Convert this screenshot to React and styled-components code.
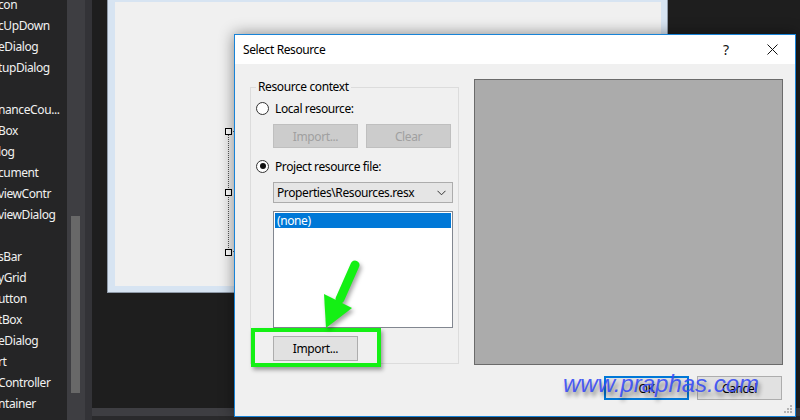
import React from "react";
import styled, { createGlobalStyle } from "styled-components";

const UI_FONT = `"Segoe UI", "Noto Sans", "Liberation Sans", sans-serif`;

const toolItems = [
	"con",
	"cUpDown",
	"eDialog",
	"tupDialog",
	"",
	"nanceCou...",
	"Box",
	"log",
	"cument",
	"viewContr",
	"viewDialog",
	"",
	"sBar",
	"yGrid",
	"utton",
	"tBox",
	"eDialog",
	"rt",
	"Controller",
	"ntainer"
];

const App = () => {
	return (
		<>
			<GlobalStyle />
			<Screen>
				<Toolbox>
					{toolItems.map((name, i) => (
						<ToolItem key={i}>{name}</ToolItem>
					))}
				</Toolbox>
				<ScrollTrack>
					<Thumb />
				</ScrollTrack>
				<Strip />
				<Designer>
					<Canvas>
						<FormFrame>
							<FormBody>
								<Selection>
									<Handle $top={-4} />
									<Handle $top={57} />
									<Handle $top={117} />
								</Selection>
							</FormBody>
						</FormFrame>
					</Canvas>
					<HScroll />
					<BottomEdge />
				</Designer>

				<Dialog>
					<TitleBar>
						<Title>Select Resource</Title>
						<TitleButton>?</TitleButton>
						<TitleButton>
							<svg width="11" height="11" viewBox="0 0 11 11">
								<path d="M0.5 0.5 L10.5 10.5 M10.5 0.5 L0.5 10.5" stroke="#111" strokeWidth="1" fill="none" />
							</svg>
						</TitleButton>
					</TitleBar>
					<DialogBody>
						<MainRow>
							<GroupBox>
								<Legend>Resource context</Legend>
								<RadioRow>
									<Radio />
									<span>Local resource:</span>
								</RadioRow>
								<ButtonPair>
									<Button disabled>Import...</Button>
									<Button disabled>Clear</Button>
								</ButtonPair>
								<RadioRow $gap={10}>
									<Radio $checked />
									<span>Project resource file:</span>
								</RadioRow>
								<Combo>
									<span>Properties\Resources.resx</span>
									<svg width="9" height="6" viewBox="0 0 9 6">
										<path d="M0.5 0.8 L4.5 4.8 L8.5 0.8" stroke="#333" strokeWidth="1" fill="none" />
									</svg>
								</Combo>
								<ListBox>
									<ListItem $selected>(none)</ListItem>
								</ListBox>
								<ImportButton>Import...</ImportButton>
							</GroupBox>
							<Preview />
						</MainRow>
						<Footer>
							<Button $default>OK</Button>
							<Button>Cancel</Button>
						</Footer>
						<Grip>
							<svg width="9" height="9" viewBox="0 0 9 9" fill="#b5b5b5">
								<rect x="6" y="0" width="2" height="2" />
								<rect x="3" y="3" width="2" height="2" />
								<rect x="6" y="3" width="2" height="2" />
								<rect x="0" y="6" width="2" height="2" />
								<rect x="3" y="6" width="2" height="2" />
								<rect x="6" y="6" width="2" height="2" />
							</svg>
						</Grip>
					</DialogBody>
				</Dialog>

				<Highlight />
				<Arrow width="64" height="82" viewBox="0 0 64 82">
					<path d="M45 10 L30 44" stroke="#14f014" strokeWidth="9" strokeLinecap="round" fill="none" />
					<polygon points="14,39 42,53 16,73" fill="#14f014" />
				</Arrow>
				<Watermark>www.praphas.com</Watermark>
			</Screen>
		</>
	);
};

const GlobalStyle = createGlobalStyle`
	html, body {
		margin: 0;
		padding: 0;
		background: #1e1e1e;
	}
	* {
		box-sizing: border-box;
	}
`;

const Screen = styled.div`
	position: relative;
	display: flex;
	width: 800px;
	height: 420px;
	overflow: hidden;
	background: #1e1e1e;
	font-family: ${UI_FONT};
	font-size: 12px;
	letter-spacing: -0.4px;
`;

const Toolbox = styled.div`
	display: flex;
	flex-direction: column;
	width: 67px;
	flex-shrink: 0;
	background: #252526;
	overflow: hidden;
`;

const ToolItem = styled.div`
	height: 21px;
	line-height: 21px;
	color: #f1f1f1;
	white-space: nowrap;
	text-indent: -2px;
	&:first-child {
		margin-top: -6px;
	}
`;

const ScrollTrack = styled.div`
	width: 18px;
	flex-shrink: 0;
	background: #3e3e42;
	padding: 216px 5px 0 4px;
`;

const Thumb = styled.div`
	height: 177px;
	background: #686868;
`;

const Strip = styled.div`
	width: 7px;
	flex-shrink: 0;
	background: #333337;
`;

const Designer = styled.div`
	display: flex;
	flex-direction: column;
	flex: 1;
`;

const Canvas = styled.div`
	flex: 1;
	padding-left: 15px;
`;

const FormFrame = styled.div`
	display: flex;
	width: 561px;
	height: 293px;
	background: #d7e4f2;
	border: 1px solid #8f9aa8;
	border-top: 0;
	padding: 2px 6px 6px 7px;
`;

const FormBody = styled.div`
	position: relative;
	flex: 1;
	background: #f0f0f0;
`;

const Selection = styled.div`
	position: absolute;
	left: 113px;
	top: 129px;
	width: 40px;
	height: 121px;
	border: 1px dotted #555;
`;

const Handle = styled.div`
	position: absolute;
	left: -4px;
	top: ${props => props.$top}px;
	width: 7px;
	height: 7px;
	background: #fff;
	border: 1px solid #000;
`;

const HScroll = styled.div`
	height: 8px;
	background: #3e3e42;
`;

const BottomEdge = styled.div`
	height: 4px;
	background: #2a2a2c;
`;

const Dialog = styled.div`
	position: absolute;
	left: 234px;
	top: 34px;
	width: 562px;
	height: 383px;
	display: flex;
	flex-direction: column;
	border: 1px solid #1883d7;
	background: #f0f0f0;
	box-shadow: 0 0 14px rgba(0, 0, 0, 0.45);
	color: #000;
`;

const TitleBar = styled.div`
	display: flex;
	align-items: center;
	height: 29px;
	background: #fff;
	padding-left: 8px;
`;

const Title = styled.div`
	flex: 1;
`;

const TitleButton = styled.div`
	display: flex;
	align-items: center;
	justify-content: center;
	width: 46px;
	height: 29px;
	font-size: 14px;
	letter-spacing: 0;
	color: #111;
`;

const DialogBody = styled.div`
	position: relative;
	flex: 1;
	display: flex;
	flex-direction: column;
	padding: 15px 12px 0 15px;
`;

const MainRow = styled.div`
	display: flex;
	gap: 15px;
`;

const GroupBox = styled.div`
	position: relative;
	display: flex;
	flex-direction: column;
	align-items: flex-start;
	width: 209px;
	height: 277px;
	margin-top: 8px;
	padding-top: 12px;
	border: 1px solid #dcdcdc;
`;

const Legend = styled.div`
	position: absolute;
	left: 5px;
	top: -9px;
	line-height: 16px;
	padding: 0 2px;
	background: #f0f0f0;
`;

const RadioRow = styled.div`
	display: flex;
	align-items: center;
	gap: 6px;
	height: 16px;
	margin-top: ${props => props.$gap || 0}px;
	padding-left: 5px;
`;

const Radio = styled.span`
	position: relative;
	width: 13px;
	height: 13px;
	border-radius: 50%;
	border: 1px solid #333;
	background: #fff;
	&::after {
		content: "";
		display: ${props => (props.$checked ? "block" : "none")};
		position: absolute;
		left: 2.5px;
		top: 2.5px;
		width: 6px;
		height: 6px;
		border-radius: 50%;
		background: #111;
	}
`;

const ButtonPair = styled.div`
	display: flex;
	gap: 8px;
	margin: 8px 0 0 22px;
`;

const Button = styled.button`
	width: 85px;
	height: 24px;
	padding: 0;
	font-family: ${UI_FONT};
	font-size: 12px;
	letter-spacing: -0.4px;
	color: #000;
	background: #e1e1e1;
	border: ${props => (props.$default ? "2px solid #0078d7" : "1px solid #adadad")};
	&:disabled {
		color: #a0a0a0;
		background: #cccccc;
		border-color: #bfbfbf;
	}
`;

const ImportButton = styled(Button)`
	height: 25px;
	margin: 8px 0 0 22px;
`;

const Combo = styled.div`
	display: flex;
	align-items: center;
	justify-content: space-between;
	width: 180px;
	height: 21px;
	margin: 8px 0 0 22px;
	padding: 0 6px 0 3px;
	background: #e5e5e5;
	border: 1px solid #acacac;
`;

const ListBox = styled.div`
	width: 180px;
	height: 117px;
	margin: 8px 0 0 22px;
	padding: 1px;
	background: #fff;
	border: 1px solid #828790;
`;

const ListItem = styled.div`
	height: 15px;
	line-height: 15px;
	padding-left: 2px;
	color: ${props => (props.$selected ? "#fff" : "#000")};
	background: ${props => (props.$selected ? "#0078d7" : "transparent")};
`;

const Preview = styled.div`
	flex: 1;
	height: 286px;
	background: #ababab;
	border: 1px solid #6b6b6b;
`;

const Footer = styled.div`
	display: flex;
	justify-content: flex-end;
	gap: 8px;
	margin-top: 11px;
	padding-right: 1px;
`;

const Grip = styled.div`
	position: absolute;
	right: 2px;
	bottom: 2px;
	line-height: 0;
`;

const Highlight = styled.div`
	position: absolute;
	left: 251px;
	top: 328px;
	width: 130px;
	height: 39px;
	border: 4px solid #14f014;
	box-shadow: 2px 3px 4px rgba(0, 0, 0, 0.35);
`;

const Arrow = styled.svg`
	position: absolute;
	left: 310px;
	top: 255px;
	filter: drop-shadow(2px 3px 2px rgba(0, 0, 0, 0.35));
`;

const Watermark = styled.div`
	position: absolute;
	left: 563px;
	top: 372px;
	font-family: "Liberation Sans", Arial, sans-serif;
	font-style: italic;
	font-size: 24px;
	line-height: 24px;
	letter-spacing: 0;
	color: rgba(58, 78, 245, 0.92);
	text-shadow: 2px 4px 4px rgba(0, 0, 0, 0.45);
	white-space: nowrap;
`;

export default App;
